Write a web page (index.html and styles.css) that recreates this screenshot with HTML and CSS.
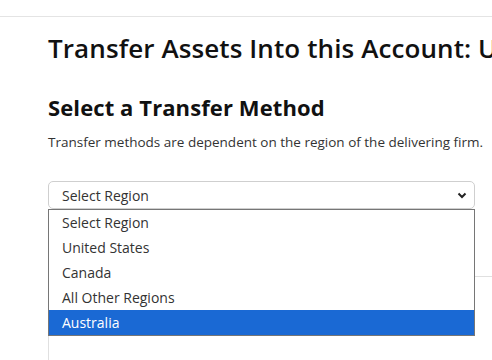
FILE: index.html
```html
<!DOCTYPE html>
<html>
<head>
    <title>Transfer Assets</title>
    <link rel="stylesheet" href="styles.css">
</head>
<body>
    <div class="top-bar"></div>
    <div class="page">
        <h1 class="page-title">Transfer Assets Into this Account: U</h1>
        <h2 class="section-title">Select a Transfer Method</h2>
        <p class="section-note">Transfer methods are dependent on the region of the delivering firm.</p>

        <div class="region-picker">
            <div class="region-select">
                <span>Select Region</span>
                <svg class="chevron" width="10" height="7" viewBox="0 0 10 7">
                    <path d="M1.5 1.5 L5 5 L8.5 1.5" fill="none" stroke="#222" stroke-width="2"/>
                </svg>
            </div>
            <ul class="region-list">
                <li>Select Region</li>
                <li>United States</li>
                <li>Canada</li>
                <li>All Other Regions</li>
                <li class="active">Australia</li>
            </ul>
        </div>

        <div class="method-box"></div>
    </div>
</body>
</html>
```

FILE: styles.css
```css
body {
    margin: 0;
    font-family: "Open Sans", "Lato", sans-serif;
    color: #111;
    background: #fff;
    overflow: hidden;
}

.top-bar {
    height: 16px;
    border-bottom: 1px solid #e4e4e4;
}

.page {
    padding-left: 48px;
    white-space: nowrap;
}

.page-title {
    font-size: 26px;
    font-weight: 600;
    margin: 14px 0 0 0;
    line-height: 34px;
    letter-spacing: 0.1px;
}

.section-title {
    font-size: 22px;
    font-weight: 700;
    margin: 28px 0 0 0;
    line-height: 28px;
    letter-spacing: 0.1px;
}

.section-note {
    font-size: 13.5px;
    color: #333;
    margin: 12px 0 0 0;
    line-height: 18px;
}

.region-picker {
    position: relative;
    width: 427px;
    margin-top: 30px;
}

.region-select {
    display: flex;
    align-items: center;
    justify-content: space-between;
    height: 26px;
    padding: 0 7px 0 13px;
    border: 1px solid #cfcfcf;
    border-radius: 5px;
    font-size: 14px;
    color: #333;
}

.region-list {
    position: absolute;
    top: 28px;
    left: 0;
    width: 425px;
    margin: 0;
    padding: 0;
    list-style: none;
    background: #fff;
    border: 1px solid #767676;
    z-index: 2;
}

.region-list li {
    height: 25px;
    line-height: 25px;
    padding-left: 13px;
    font-size: 14px;
    color: #333;
}

.region-list li.active {
    background: #1a69d4;
    color: #fff;
}

.method-box {
    margin-top: 67px;
    height: 120px;
    border-top: 1px solid #e0e0e0;
    border-left: 1px solid #e0e0e0;
}
```
